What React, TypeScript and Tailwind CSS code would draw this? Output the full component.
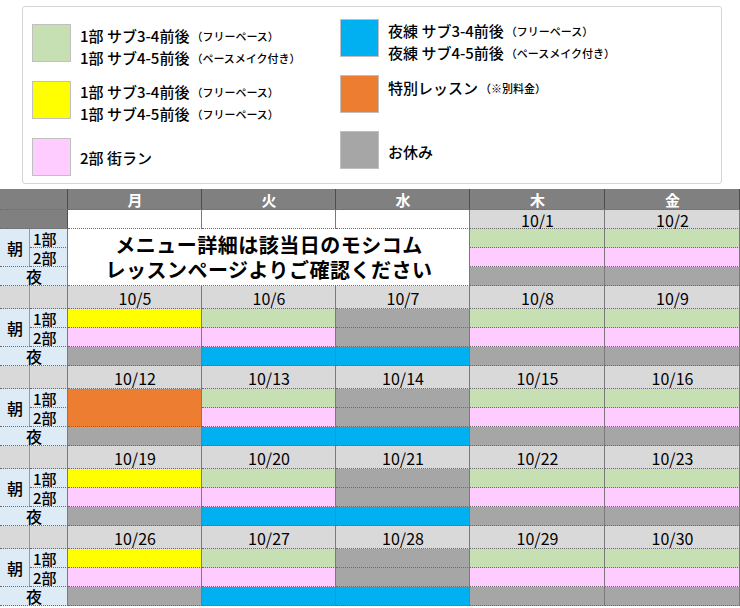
import type { ReactNode } from "react";

const fill: Record<string, string> = {
  g: "bg-[#c6e0b4]",
  p: "bg-[#ffccff]",
  k: "bg-[#a6a6a6]",
  b: "bg-[#00b0f0]",
  y: "bg-[#ffff00]",
  o: "bg-[#ed7d31]",
};

const legendLeft = [
  {
    color: "bg-[#c6e0b4]",
    shift: "mt-[6px]",
    lines: [
      ["1部 サブ3-4前後", "（フリーペース）"],
      ["1部 サブ4-5前後", "（ペースメイク付き）"],
    ],
  },
  {
    color: "bg-[#ffff00]",
    shift: "mt-[4px]",
    lines: [
      ["1部 サブ3-4前後", "（フリーペース）"],
      ["1部 サブ4-5前後", "（フリーペース）"],
    ],
  },
  { color: "bg-[#ffccff]", shift: "", lines: [["2部 街ラン", ""]] },
];

const legendRight = [
  {
    color: "bg-[#00b0f0]",
    shift: "mt-[6px]",
    lines: [
      ["夜練 サブ3-4前後", "（フリーペース）"],
      ["夜練 サブ4-5前後", "（ペースメイク付き）"],
    ],
  },
  { color: "bg-[#ed7d31]", shift: "mb-[14px]", lines: [["特別レッスン", "（※別料金）"]] },
  { color: "bg-[#a6a6a6]", shift: "mt-[3px]", lines: [["お休み", ""]] },
];

const weekdays = ["月", "火", "水", "木", "金"];

const weeks = [
  { dates: ["10/5", "10/6", "10/7", "10/8", "10/9"], days: ["ypk", "gpb", "kkb", "gpk", "gpk"] },
  { dates: ["10/12", "10/13", "10/14", "10/15", "10/16"], days: ["ook", "gpb", "kkb", "gpk", "gpk"] },
  { dates: ["10/19", "10/20", "10/21", "10/22", "10/23"], days: ["ypk", "gpb", "kkb", "gpk", "gpk"] },
  { dates: ["10/26", "10/27", "10/28", "10/29", "10/30"], days: ["ypk", "gpb", "kkb", "gpk", "gpk"] },
];

const LegendItem = ({ item }: { item: (typeof legendLeft)[number] }) => (
  <div className="flex items-center gap-[9px] h-[38px]">
    <div className={`w-[39px] h-[38px] border border-[#c0c0c0] shrink-0 ${item.color}`} />
    <div className={`flex flex-col ${item.shift}`}>
      {item.lines.map(([main, note], i) => (
        <div key={i} className="h-[22px] flex items-center whitespace-nowrap">
          <span className="text-[15px] font-medium leading-none">{main}</span>
          {note && <span className="text-[11px] font-medium leading-none ml-[2px] mt-[2px]">{note}</span>}
        </div>
      ))}
    </div>
  </div>
);

const Cell = ({
  cls = "",
  edge = "shadow-[inset_-1px_0_0_#7a7a7a]",
  children,
}: {
  cls?: string;
  edge?: string;
  children?: ReactNode;
}) => (
  <div className={`flex items-center justify-center leading-none border-b border-dotted border-[#6b6b6b] ${edge} ${cls}`}>
    {children}
  </div>
);

const label = "bg-[#ddebf7] text-[16px] font-medium";
const part = "bg-[#ddebf7] text-[15px] font-medium justify-start pl-[3px]";
const labelEdge = "shadow-[inset_-1px_0_0_#9a9a9a]";

export default function App() {
  return (
    <div className="w-[740px] h-[608px] bg-white text-black overflow-hidden font-['Noto_Sans_CJK_JP','Noto_Sans',sans-serif]">
      <div className="ml-[22px] mt-[6px] w-[700px] h-[178px] border border-[#d4d4d4] rounded-[3px] flex">
        <div className="w-[317px] pl-[9px] pt-[17px] flex flex-col gap-[19px]">
          {legendLeft.map((item, i) => (
            <LegendItem key={i} item={item} />
          ))}
        </div>
        <div className="pt-[12px] flex flex-col gap-[18px]">
          {legendRight.map((item, i) => (
            <LegendItem key={i} item={item} />
          ))}
        </div>
      </div>

      <div className="mt-[5px] grid grid-cols-[30px_38px_134px_134px_134px_135px_135px] grid-rows-[21px_19px_19px_19px_19px_repeat(4,23px_19px_19px_19px)]">
        {/* header */}
        <Cell cls="col-span-2 bg-[#808080]" edge="shadow-[inset_-1px_0_0_#4d4d4d]" />
        {weekdays.map((d) => (
          <Cell key={d} cls="bg-[#808080] text-white text-[15px] font-bold" edge="shadow-[inset_-1px_0_0_#4d4d4d]">
            {d}
          </Cell>
        ))}

        {/* first week */}
        <Cell cls="col-span-2 bg-[#808080]" edge="shadow-[inset_-1px_0_0_#4d4d4d]" />
        <Cell cls="bg-white" />
        <Cell cls="bg-white" />
        <Cell cls="bg-white" />
        <Cell cls="bg-[#d9d9d9] text-[16px] pt-[2px]">10/1</Cell>
        <Cell cls="bg-[#d9d9d9] text-[16px] pt-[2px]">10/2</Cell>

        <Cell cls={`row-span-2 ${label}`} edge={labelEdge}>朝</Cell>
        <Cell cls={part}>1部</Cell>
        <Cell cls="col-span-3 row-span-3 bg-white flex-col text-[20px] font-bold !leading-[25px] tracking-[0.5px]">
          <span>メニュー詳細は該当日のモシコム</span>
          <span>レッスンページよりご確認ください</span>
        </Cell>
        <Cell cls={fill.g} />
        <Cell cls={fill.g} />
        <Cell cls={part}>2部</Cell>
        <Cell cls={fill.p} />
        <Cell cls={fill.p} />
        <Cell cls={`col-span-2 ${label}`}>夜</Cell>
        <Cell cls={fill.k} />
        <Cell cls={fill.k} />

        {weeks.map((w, wi) => (
          <div key={wi} className="contents">
            <Cell cls="bg-[#d9d9d9]" edge={labelEdge} />
            <Cell cls="bg-[#d9d9d9]" />
            {w.dates.map((d) => (
              <Cell key={d} cls="bg-[#d9d9d9] text-[16px] pt-[2px]">
                {d}
              </Cell>
            ))}

            <Cell cls={`row-span-2 ${label}`} edge={labelEdge}>朝</Cell>
            <Cell cls={part}>1部</Cell>
            {w.days.map((d, i) =>
              d[0] === "o" ? (
                <Cell key={i} cls={`row-span-2 ${fill.o}`} />
              ) : (
                <Cell key={i} cls={fill[d[0]]} />
              )
            )}

            <Cell cls={part}>2部</Cell>
            {w.days.map((d, i) => (d[0] === "o" ? null : <Cell key={i} cls={fill[d[1]]} />))}

            <Cell cls={`col-span-2 ${label}`}>夜</Cell>
            {w.days.map((d, i) => (
              <Cell key={i} cls={fill[d[2]]} />
            ))}
          </div>
        ))}
      </div>
    </div>
  );
}
